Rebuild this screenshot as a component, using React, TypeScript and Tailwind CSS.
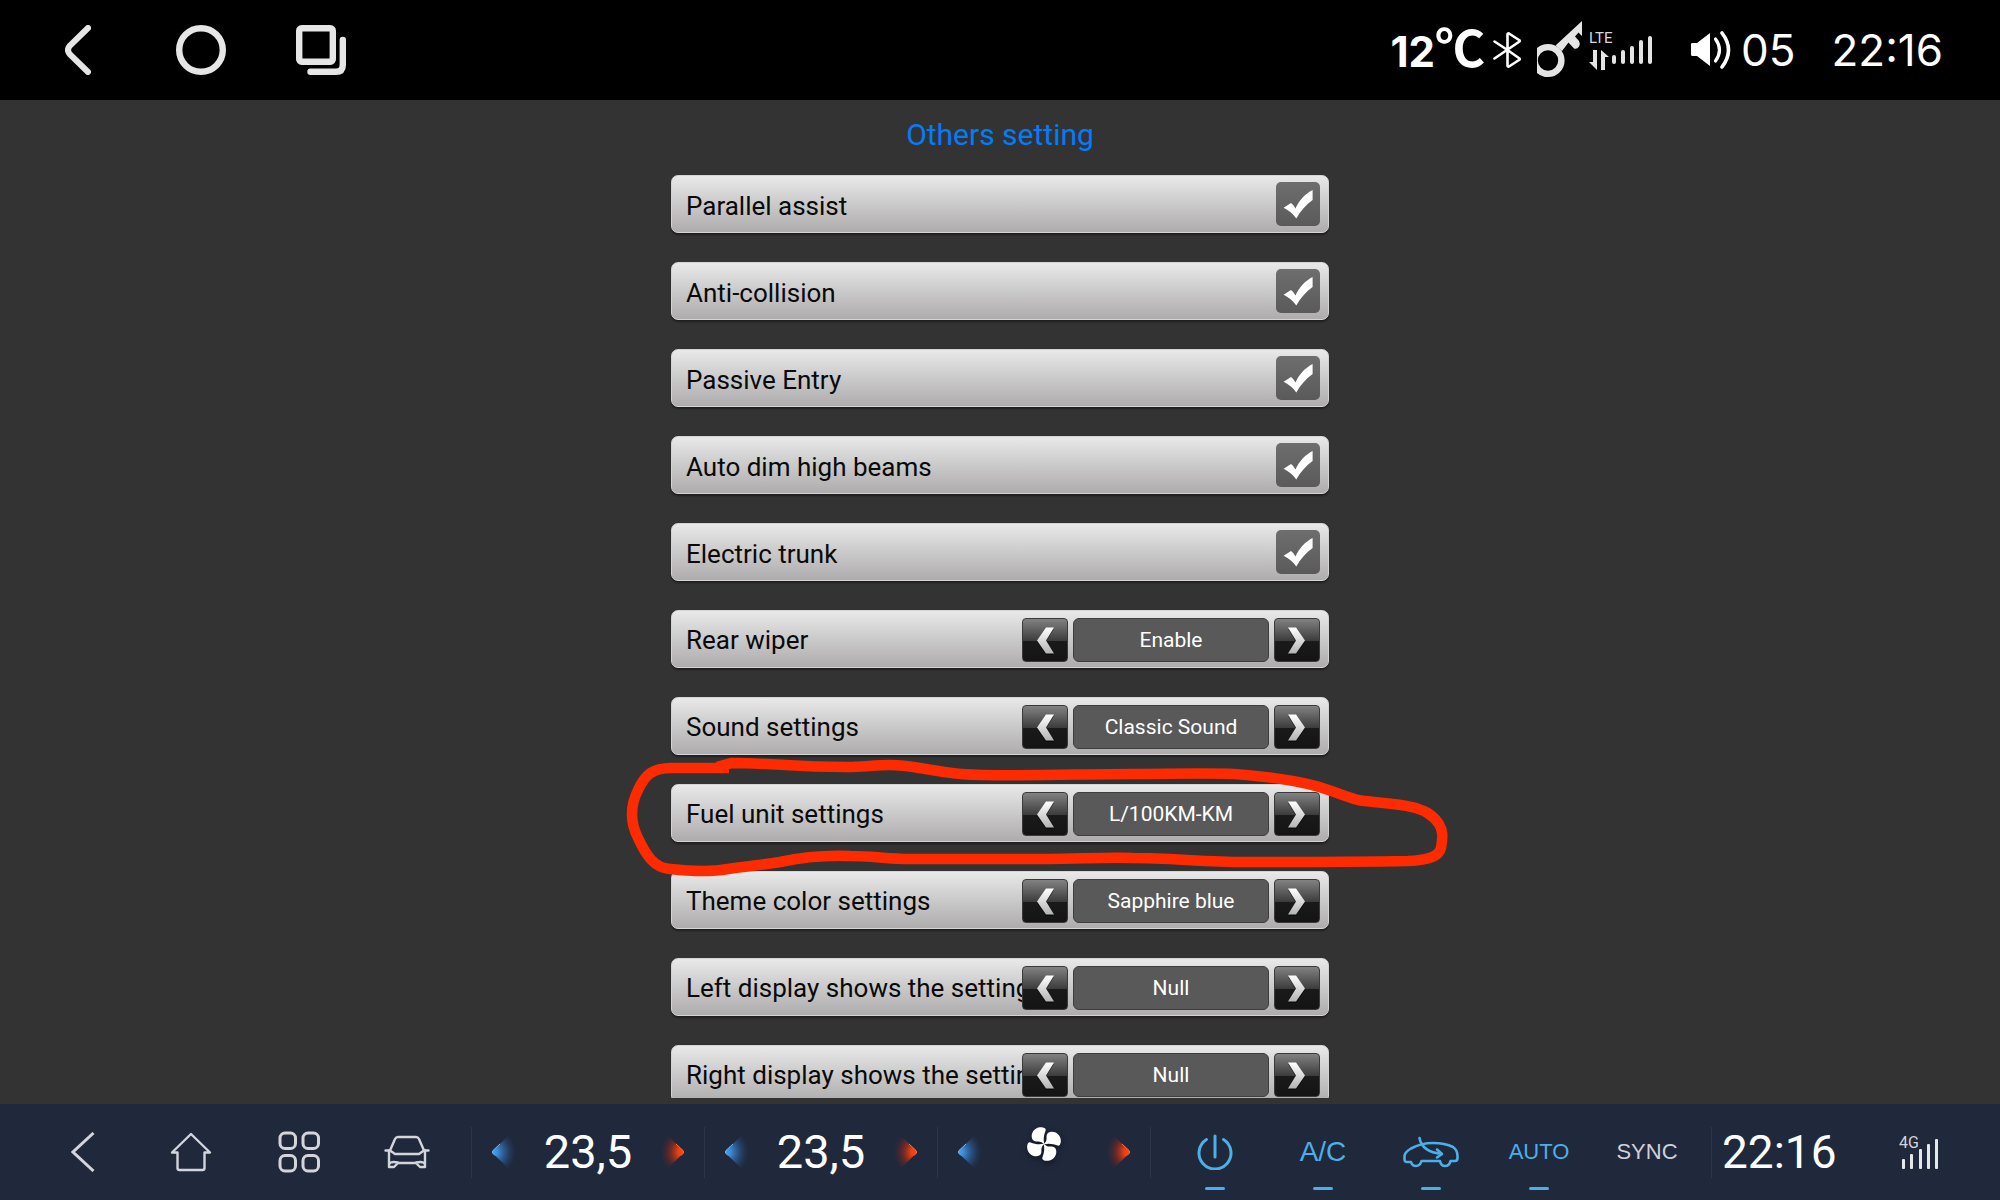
import { useId, useState, type ReactNode } from 'react';

interface ToggleSetting {
  id: string;
  label: string;
}

interface OptionSetting {
  id: string;
  label: string;
  options: string[];
  marked?: boolean;
}

const toggles: ToggleSetting[] = [
  { id: 'parallel', label: 'Parallel assist' },
  { id: 'collision', label: 'Anti-collision' },
  { id: 'passive', label: 'Passive Entry' },
  { id: 'highbeam', label: 'Auto dim high beams' },
  { id: 'trunk', label: 'Electric trunk' },
];

const choices: OptionSetting[] = [
  { id: 'wiper', label: 'Rear wiper', options: ['Enable', 'Disable'] },
  { id: 'sound', label: 'Sound settings', options: ['Classic Sound', 'Modern Sound'] },
  { id: 'fuel', label: 'Fuel unit settings', options: ['L/100KM-KM', 'KM/L-KM', 'MPG-MILE'], marked: true },
  { id: 'theme', label: 'Theme color settings', options: ['Sapphire blue', 'Ruby red'] },
  { id: 'left', label: 'Left display shows the settings', options: ['Null', 'Fuel'] },
  { id: 'right', label: 'Right display shows the settings', options: ['Null', 'Fuel'] },
];

const rowClass =
  'relative flex h-[58px] items-center rounded-[7px] border border-[#d4d4d6] bg-linear-to-b from-[#e9e9ea] to-[#aeacad] pl-[14px] pr-2 shadow-[0_2px_2px_rgba(0,0,0,0.4)]';

function ToggleRow({ label }: { label: string }) {
  const id = useId();
  const [on, setOn] = useState(true);

  return (
    <div className={rowClass}>
      <label htmlFor={id} className="min-w-0 flex-1 overflow-hidden pt-1 text-[26px] leading-8 whitespace-nowrap text-[#0a0a0a]">
        {label}
      </label>
      <div className="relative size-11">
        <input
          id={id}
          type="checkbox"
          checked={on}
          onChange={(e) => setOn(e.target.checked)}
          className="block size-11 appearance-none rounded-[5px] bg-linear-to-b from-[#6e6e6e] to-[#5a5a5a]"
        />
        {on && (
          <svg viewBox="0 0 44 44" className="pointer-events-none absolute inset-0 size-11">
            <path d="M36.6 8V18C30 22.5 24.5 29 20.3 36.5C17.5 32 12 28 7.6 25.7L15 21C17 22.5 18.4 24.2 19.4 26.5C23.5 18 29 12 36.6 8Z" fill="#fff" />
          </svg>
        )}
      </div>
    </div>
  );
}

function StepButton({ label, flip, onClick }: { label: string; flip?: boolean; onClick: () => void }) {
  const gradient = useId();

  return (
    <button
      type="button"
      aria-label={label}
      onClick={onClick}
      className="h-11 w-[46px] shrink-0 rounded-[4px] border border-[#3a3a3a] bg-[linear-gradient(#828282,#3c3c3c_52%,#1a1a1a_53%,#141414)]"
    >
      <svg viewBox="1 1 44 42" className={flip ? 'h-[42px] w-11 -scale-x-100' : 'h-[42px] w-11'}>
        <defs>
          <linearGradient id={gradient} x1="0" y1="0" x2="0" y2="1">
            <stop offset="0" stopColor="#fff" />
            <stop offset="1" stopColor="#b4b4b4" />
          </linearGradient>
        </defs>
        <path d="M32 11H24L15 24L24 37H32L24 24Z" fill="#000" opacity="0.45" />
        <path d="M32 9.5H24L15 22.5L24 35.5H32L24 22.5Z" fill={`url(#${gradient})`} />
      </svg>
    </button>
  );
}

function MarkerLoop() {
  return (
    <svg
      viewBox="625 755 825 125"
      className="pointer-events-none absolute -top-[30px] -left-[47px] z-10 h-[125px] w-[825px]"
      fill="none"
      stroke="#ff2b00"
      strokeWidth="10.5"
      strokeLinejoin="round"
    >
      <path d="M729 768H672C652 768 645 775 638 790C630 806 630 822 638 838C646 855 654 868 670 869C688 871 712 872 728 869C748 866 762 865 780 862C808 856 828 855 850 856C872 856 888 859 910 859H1049C1078 859 1105 857 1133 858C1170 858 1205 862 1245 862C1300 862 1350 862 1408 861C1430 860 1439 856 1441 848C1443 836 1443 831 1439 824C1432 814 1424 810 1412 807C1394 803 1376 803 1358 800C1342 796 1330 789 1312 785C1288 779 1262 776 1234 774C1202 773 1166 774 1133 774C1086 774 1035 776 983 775C964 775 948 773 932 770C918 768 906 765 890 765C876 765 862 767 847 767C820 767 800 766 785 765C766 764 748 763 732 763C726 764 722 766 717 767" />
    </svg>
  );
}

function OptionRow({ label, options, marked }: OptionSetting) {
  const [index, setIndex] = useState(0);
  const step = (by: number) => setIndex((index + by + options.length) % options.length);

  return (
    <div className={`${rowClass} pt-0.5`} role="group" aria-label={label}>
      <span className="min-w-0 flex-1 overflow-hidden text-[26px] leading-8 whitespace-nowrap text-[#0a0a0a]">{label}</span>
      <StepButton label="Previous" onClick={() => step(-1)} />
      <output className="mx-[5px] flex h-11 w-49 shrink-0 items-center justify-center rounded-md border border-[#3e3e3e] bg-[#595959] text-[21px] leading-7 text-white">
        {options[index]}
      </output>
      <StepButton label="Next" flip onClick={() => step(1)} />
      {marked && <MarkerLoop />}
    </div>
  );
}

function TopBar() {
  return (
    <header className="flex h-25 shrink-0 items-center justify-between bg-black pr-[57px] pl-[65px] text-white">
      <div className="flex items-center">
        <button type="button" aria-label="Back" className="mr-[85px]">
          <svg viewBox="0 0 26 50" className="h-[50px] w-[26px]" fill="none" stroke="#e6e6e6" strokeWidth="6" strokeLinecap="round">
            <path d="M23 3L5 20.5Q1 25 5 29.5L23 47" />
          </svg>
        </button>
        <button type="button" aria-label="Home" className="mr-[70px]">
          <svg viewBox="0 0 50 50" className="size-[50px]" fill="none" stroke="#e6e6e6" strokeWidth="6.4">
            <circle cx="25" cy="25" r="21.8" />
          </svg>
        </button>
        <button type="button" aria-label="Recent apps">
          <svg viewBox="0 0 50 50" className="size-[50px]" fill="none" stroke="#e6e6e6" strokeWidth="6.4" strokeLinecap="round">
            <rect x="3.2" y="3.2" width="33.6" height="33.6" rx="2.5" />
            <path d="M46.8 15V40Q46.8 46.8 40 46.8H14.5" />
          </svg>
        </button>
      </div>

      <div className="flex items-center font-['Inter',sans-serif]">
        <span className="pb-1 text-[42px] leading-12 font-bold">
          12<span className="font-['Noto_Sans_CJK_SC',sans-serif] text-[50px] leading-12">℃</span>
        </span>
        <svg viewBox="0 0 28 36" className="ml-2 h-9 w-7" fill="none" stroke="#fff" strokeWidth="2.6" strokeLinejoin="round" strokeLinecap="round">
          <path d="M1.5 9.5L14.5 18L26.5 26.5Q27 27.5 26 28L16 34.5Q14.5 35 14.5 33.5V2.5Q14.5 1 16 1.5L26 8Q27 8.5 26.5 9.5L1.5 26.5" />
        </svg>
        <svg viewBox="0 0 45 58" className="ml-4 h-[58px] w-[45px] overflow-hidden" fill="#e4e4e4">
          <circle cx="11" cy="39.5" r="13.4" fill="none" stroke="#e4e4e4" strokeWidth="6.4" />
          <path d="M18.5 24.5L45 0V15L41.5 11.5L38 15.5L42 20Q43.5 22.5 42 25.5Q40 28.5 37 27.5L31.5 21.5L25 30Z" />
        </svg>
        <div className="ml-[7px] flex w-[63px] flex-col">
          <span className="font-['Roboto',sans-serif] text-[15px] leading-4 text-[#d8d8d8]">LTE</span>
          <svg viewBox="0 0 63 36" className="-mt-3 h-9 w-[63px] overflow-visible" fill="#e4e4e4">
            <path d="M4 16H8V36L0 28H4ZM12 36V16L20 23H16V36Z" />
            <rect x="23" y="21" width="4" height="9" rx="2" />
            <rect x="32" y="16" width="4" height="14" rx="2" />
            <rect x="41" y="12" width="4" height="18" rx="2" />
            <rect x="50" y="6" width="4" height="24" rx="2" />
            <rect x="59" y="2" width="4" height="28" rx="2" />
          </svg>
        </div>
        <svg viewBox="0 0 40 38" className="ml-[39px] h-[38px] w-10" fill="none" stroke="#fff" strokeLinecap="round">
          <path d="M0 13Q0 12 1.5 12H6L19 2V35L6 25H1.5Q0 25 0 23.5Z" fill="#fff" stroke="none" />
          <path d="M24.5 8Q32.5 19 24.5 30" strokeWidth="3.2" />
          <path d="M31 2Q44 19 31 36" strokeWidth="3.6" />
        </svg>
        <span className="ml-[10px] text-[44px] leading-12">05</span>
        <time className="ml-9 text-[44px] leading-12">22:16</time>
      </div>
    </header>
  );
}

function ArrowButton({ label, side }: { label: string; side: 'cool' | 'warm' }) {
  const id = useId();
  const cool = side === 'cool';

  return (
    <button type="button" aria-label={label} className="shrink-0">
      <svg viewBox="0 0 28 36" className={cool ? 'h-9 w-7' : 'h-9 w-7 -scale-x-100'}>
        <defs>
          <radialGradient id={id} gradientUnits="userSpaceOnUse" cx="0" cy="18" r="24">
            <stop offset="0" stopColor={cool ? '#4aa5f5' : '#ff4a12'} />
            <stop offset="0.25" stopColor={cool ? '#3d8ad2' : '#ee3f10'} />
            <stop offset="0.6" stopColor={cool ? '#2b5f9a' : '#8c2a1c'} stopOpacity="0.65" />
            <stop offset="1" stopColor={cool ? '#24406c' : '#4a2530'} stopOpacity="0" />
          </radialGradient>
        </defs>
        <path d="M1 16.5L17 1L28 12V24L17 35L1 19.5Q-0.5 18 1 16.5Z" fill={`url(#${id})`} />
        <path d="M8 10L1 16.5Q-0.3 18 1 19.5L3 21.5" fill="none" stroke={cool ? '#6cb8fa' : '#ff6a3a'} strokeWidth="1" />
      </svg>
    </button>
  );
}

function ClimateStepper({ name, children }: { name: string; children: ReactNode }) {
  return (
    <div role="group" aria-label={name} className="flex h-[51px] items-center justify-between border-l border-[#2d3548] px-5">
      <ArrowButton label="Decrease" side="cool" />
      {children}
      <ArrowButton label="Increase" side="warm" />
    </div>
  );
}

function DockButton({ label, active, children }: { label: string; active?: boolean; children: ReactNode }) {
  return (
    <button type="button" aria-label={label} className="relative flex h-24 min-w-0 flex-1 items-center justify-center">
      {children}
      {active && <span className="absolute bottom-[10px] h-[3px] w-5 rounded-full bg-[#4bb0e8]" />}
    </button>
  );
}

function Dock() {
  return (
    <footer className="grid h-24 shrink-0 grid-cols-[471fr_233fr_233fr_213fr_561fr_289fr] items-center bg-[#20283c] text-white">
      <div className="flex pr-[10px] pl-[29px] text-[#d3d5da]">
        <DockButton label="Back">
          <svg viewBox="0 0 24 40" className="h-10 w-6" fill="none" stroke="currentColor" strokeWidth="3">
            <path d="M22.5 1L2 20L22.5 39" />
          </svg>
        </DockButton>
        <DockButton label="Home">
          <svg viewBox="0 0 42 40" className="h-10 w-[42px]" fill="none" stroke="currentColor" strokeWidth="2.4" strokeLinejoin="round">
            <path d="M21 2L40 20.5H34.5V36Q34.5 38 32.5 38H9.5Q7.5 38 7.5 36V20.5H2Z" />
          </svg>
        </DockButton>
        <DockButton label="Apps">
          <svg viewBox="0 0 42 42" className="size-[42px]" fill="none" stroke="currentColor" strokeWidth="3">
            <rect x="2" y="2" width="15.5" height="15.5" rx="5" />
            <rect x="25" y="2" width="15.5" height="15.5" rx="5" />
            <rect x="2" y="24.5" width="15.5" height="15.5" rx="5" />
            <rect x="25" y="24.5" width="15.5" height="15.5" rx="5" />
          </svg>
        </DockButton>
        <DockButton label="Vehicle">
          <svg viewBox="0 0 46 34" className="h-[34px] w-[46px]" fill="none" stroke="currentColor" strokeWidth="2.4" strokeLinejoin="round" strokeLinecap="round">
            <path d="M1.5 15.5H6L11 4Q12 2 14 2H32Q34 2 35 4L40 15.5H44.5" />
            <path d="M6 15.5L11 19H35L40 15.5M5 15.5V32H10L14 28H32L36 32H41V15.5M5 29Q7 26 14 27.5M41 29Q39 26 32 27.5" />
          </svg>
        </DockButton>
      </div>

      <ClimateStepper name="Left temperature">
        <span className="text-[47px] leading-12">23,5</span>
      </ClimateStepper>
      <ClimateStepper name="Right temperature">
        <span className="text-[47px] leading-12">23,5</span>
      </ClimateStepper>
      <ClimateStepper name="Fan speed">
        <svg viewBox="-20 -20 40 40" className="mb-4 size-10 drop-shadow-[0_2px_3px_rgba(0,0,0,0.5)]" fill="#fff">
          {[0, 90, 180, 270].map((angle) => (
            <path
              key={angle}
              transform={`rotate(${angle})`}
              d="M0.5 0.5C-1 -5 0 -9 1.6 -13.5C2.5 -16 -1 -17 -4 -16.8C-9 -16.5 -12.5 -12 -12.3 -7.5C-12 -3 -9 -2.4 -6 -2.6C-3 -2.6 -1.5 -1.5 0.5 0.5Z"
            />
          ))}
        </svg>
      </ClimateStepper>

      <div className="flex h-24 items-center">
        <div className="h-[51px] w-px bg-[#2d3548]" />
        <div className="flex flex-1 px-[10px] font-['Liberation_Sans',sans-serif] text-[#4bb0e8]">
          <DockButton label="Power" active>
            <svg viewBox="0 0 36 36" className="size-9" fill="none" stroke="currentColor" strokeWidth="3" strokeLinecap="round">
              <path d="M9.5 5.5A16 16 0 1 0 26.5 5.5M18 2V23" />
            </svg>
          </DockButton>
          <DockButton label="A/C" active>
            <span className="text-[28px] leading-8">A/C</span>
          </DockButton>
          <DockButton label="Recirculation" active>
            <svg viewBox="0 0 56 32" className="h-8 w-14" fill="none" stroke="currentColor" strokeWidth="2.6" strokeLinejoin="round" strokeLinecap="round">
              <path d="M8 26H4Q1.5 26 1.5 23.5V20Q2 16 8 12.5Q18 7 30 7Q42 7 50 11Q54.5 14 54.5 20V22Q54.5 25 52 25H47.5Q46.5 30 42 30Q38 30 37 25H18.5Q17 30 13 30Q9 30 8 26Z" />
              <path d="M16.5 2Q19 16 39 18M34 13.5L39 18L34 21.5" />
            </svg>
          </DockButton>
          <DockButton label="AUTO" active>
            <span className="text-[22px] leading-8">AUTO</span>
          </DockButton>
          <DockButton label="SYNC">
            <span className="text-[22px] leading-8 text-[#cfd1d6]">SYNC</span>
          </DockButton>
        </div>
      </div>

      <div className="flex h-[51px] items-center justify-between border-l border-[#2d3548] pr-[61px] pl-[10px]">
        <time className="text-[46px] leading-12">22:16</time>
        <div className="flex w-10 flex-col">
          <span className="text-base leading-4 text-[#d3d5da]">4G</span>
          <svg viewBox="0 0 40 30" className="-mt-3 h-[30px] w-10" fill="#e6e7ea">
            <rect x="3" y="20" width="3" height="10" rx="1" />
            <rect x="11" y="15" width="3" height="15" rx="1" />
            <rect x="20" y="10" width="3" height="20" rx="1" />
            <rect x="28" y="5" width="3" height="25" rx="1" />
            <rect x="36" y="0" width="3" height="30" rx="1" />
          </svg>
        </div>
      </div>
    </footer>
  );
}

export default function App() {
  return (
    <div className="flex h-screen flex-col bg-[#333333] font-['Roboto',sans-serif]">
      <TopBar />
      <main className="flex min-h-0 flex-1 flex-col pt-[17px] pb-[6px]">
        <h1 className="text-center text-[30px] leading-9 text-[#007dfa]">Others setting</h1>
        <div className="mt-[22px] min-h-0 flex-1 overflow-hidden">
          <div className="mx-auto flex w-full max-w-[658px] flex-col gap-[29px]">
            {toggles.map((item) => (
              <ToggleRow key={item.id} label={item.label} />
            ))}
            {choices.map((item) => (
              <OptionRow key={item.id} {...item} />
            ))}
          </div>
        </div>
      </main>
      <Dock />
    </div>
  );
}
